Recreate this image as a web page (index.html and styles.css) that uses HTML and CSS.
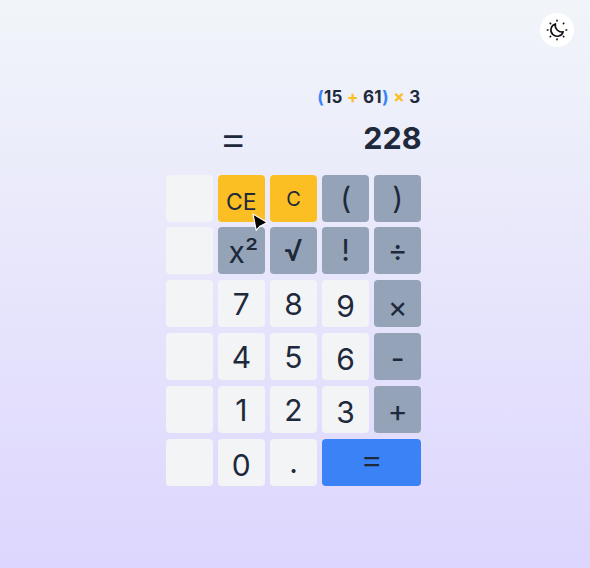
FILE: index.html
```html
<!DOCTYPE html>
<html lang="en">
<head>
<meta charset="utf-8">
<title>Calculator</title>
<link rel="stylesheet" href="styles.css">
</head>
<body>
<button class="theme" aria-label="Theme">
<svg width="22" height="22" viewBox="0 0 22 22" fill="none" stroke="#111" stroke-width="1.6" stroke-linecap="round" stroke-linejoin="round">
<path d="M9.4 4.9A6.3 6.3 0 1 0 17.2 12.8C12.6 13.8 8.4 9.6 9.4 4.9Z"/>
<path d="M11 1.3v.7M11 20v.7M1.3 11H2M20 11h.7M4.2 4.2l.4.4M17.8 4.2l-.4.4M4.2 17.8l.4-.4M17.8 17.8l-.4-.4"/>
</svg>
</button>
<main class="calculator">
<div class="expression"><span class="paren">(</span>15 <span class="op">+</span> 61<span class="paren">)</span> <span class="op">×</span> 3</div>
<div class="result"><span class="equals">=</span><span class="value">228</span></div>
<div class="keys">
<button class="key"></button><button class="key clear ce">CE</button><button class="key clear c">C</button><button class="key fn">(</button><button class="key fn">)</button>
<button class="key"></button><button class="key fn square">x²</button><button class="key fn root">√</button><button class="key fn">!</button><button class="key fn divide">÷</button>
<button class="key"></button><button class="key digit">7</button><button class="key digit">8</button><button class="key low">9</button><button class="key fn times">×</button>
<button class="key"></button><button class="key digit">4</button><button class="key digit">5</button><button class="key low">6</button><button class="key fn minus">-</button>
<button class="key"></button><button class="key digit">1</button><button class="key digit">2</button><button class="key low">3</button><button class="key fn plus">+</button>
<button class="key"></button><button class="key low">0</button><button class="key dot">.</button><button class="key equal">=</button>
</div>
</main>
<svg class="cursor" width="20" height="24" viewBox="0 0 20 24"><path d="M2 2L5.2 18.4L8.9 14.2L16.2 10.5Z" fill="#000" stroke="#fff" stroke-width="1.2" stroke-linejoin="round"/></svg>
</body>
</html>
```
FILE: styles.css
```css
* { box-sizing: border-box; }
body {
  margin: 0;
  height: 568px;
  overflow: hidden;
  background: linear-gradient(#f1f5f9, #ddd6fe);
  color: #1e293b;
  font-family: Inter, sans-serif;
}
button { border: 0; padding: 0; font: inherit; color: inherit; }
.theme {
  position: absolute;
  top: 13px;
  right: 16px;
  width: 34px;
  height: 34px;
  border-radius: 50%;
  background: #fff;
  display: flex;
  align-items: center;
  justify-content: center;
}
.calculator { width: 256px; margin-left: 165.5px; padding-top: 85px; }
.expression {
  height: 24px;
  line-height: 24px;
  padding-right: 1px;
  text-align: right;
  font-size: 17px;
  font-weight: 700;
  letter-spacing: 0.25px;
}
.paren { color: #3b82f6; }
.op { color: #fbbf24; }
.result {
  display: flex;
  justify-content: space-between;
  height: 66px;
  padding-left: 53px;
  line-height: 58px;
}
.equals { font-size: 45px; font-weight: 300; line-height: 58px; }
.value { font-size: 30.5px; font-weight: 700; }
.keys {
  display: grid;
  grid-template-columns: repeat(5, 47.4px);
  grid-template-rows: 46.8px 48.3px repeat(4, 48.3px);
  gap: 4.75px;
}
.key {
  height: 47.3px;
  border-radius: 4px;
  background: #f3f4f6;
  font-size: 30px;
  font-weight: 400;
  line-height: 47px;
  text-align: center;
}
.fn { background: #94a3b8; }
.clear { background: #fbbf24; }
.ce { font-size: 23px; padding-top: 4px; }
.c { font-size: 20px; padding-top: 1px; }
.square { padding: 2px 0 0 4px; }
.root { font-weight: 500; font-size: 30px; }
.divide { line-height: 45px; }
.digit { padding-top: 1px; }
.low { padding-top: 3px; line-height: 46px; }
.dot { line-height: 46px; }
.times { padding-top: 4px; line-height: 46px; }
.minus { padding-top: 2px; }
.plus { padding-top: 2px; }
.equal { grid-column: span 2; font-size: 36px; font-weight: 300; line-height: 40px; padding-bottom: 7px; background: #3b82f6; }
.cursor { position: absolute; left: 251px; top: 212px; }
```
